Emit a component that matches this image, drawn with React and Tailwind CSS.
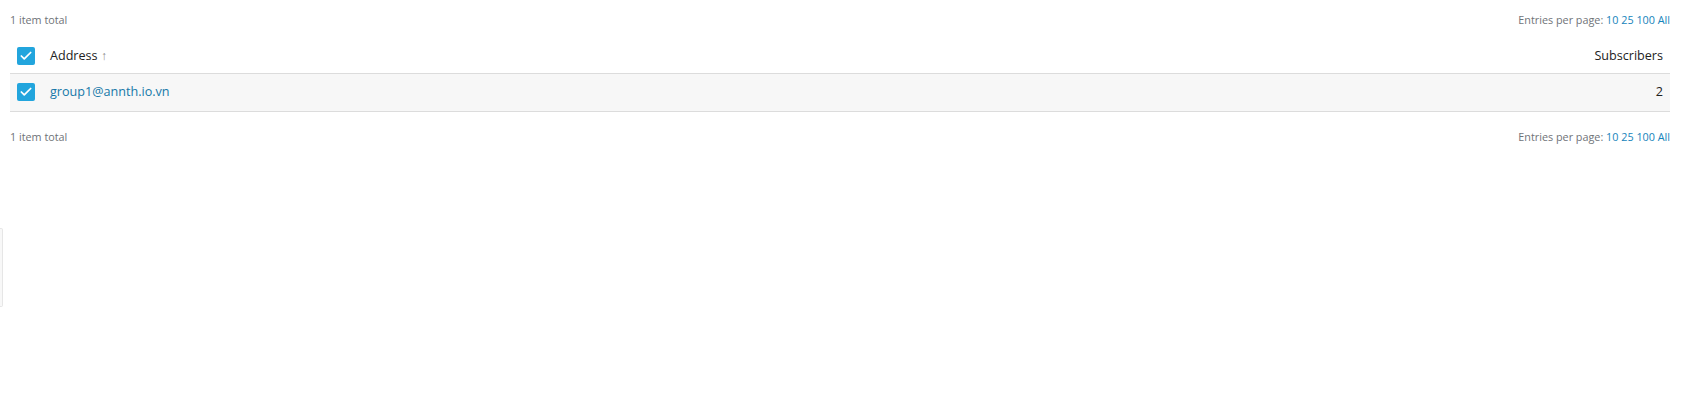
import { Check } from 'lucide-react';

function Box() {
  return (
    <span className="flex h-[18px] w-[18px] items-center justify-center rounded-[2px] bg-[#22a5dd]">
      <Check className="h-[14px] w-[14px] text-white" strokeWidth={3} />
    </span>
  );
}

function Pager() {
  return (
    <div className="flex h-[40px] items-center justify-between text-[10.8px] text-[#6f7378]">
      <span>1 item total</span>
      <span>
        Entries per page:{' '}
        <a className="text-[#1684bb]">10</a> <a className="text-[#1684bb]">25</a>{' '}
        <a className="text-[#1684bb]">100</a> <a className="text-[#1684bb]">All</a>
      </span>
    </div>
  );
}

export default function App() {
  return (
    <div className="relative min-h-[402px] bg-white pl-[10px] pr-[12px] font-['Open_Sans',sans-serif]">
      <Pager />
      <table className="w-full border-collapse text-[12.6px]">
        <thead>
          <tr className="h-[33px] border-b border-[#dcdcdc] text-[#222]">
            <th className="w-[36px] pl-[7px] text-left font-normal">
              <Box />
            </th>
            <th className="pl-[4px] text-left font-normal">
              Address <span className="text-[12px] text-[#8a8a8a]">↑</span>
            </th>
            <th className="pr-[7px] text-right font-normal">Subscribers</th>
          </tr>
        </thead>
        <tbody>
          <tr className="h-[38px] border-b border-[#dcdcdc] bg-[#f7f7f7]">
            <td className="pl-[7px]">
              <Box />
            </td>
            <td className="pl-[4px]">
              <a className="text-[#1577a8]">group1@annth.io.vn</a>
            </td>
            <td className="pr-[7px] text-right text-[#222]">2</td>
          </tr>
        </tbody>
      </table>
      <div className="pt-[6px]">
        <Pager />
      </div>
      <div className="absolute left-0 top-[228px] h-[79px] w-[3px] rounded-r-[2px] border border-l-0 border-[#e6e6e6] bg-[#f8f8f8]" />
    </div>
  );
}
